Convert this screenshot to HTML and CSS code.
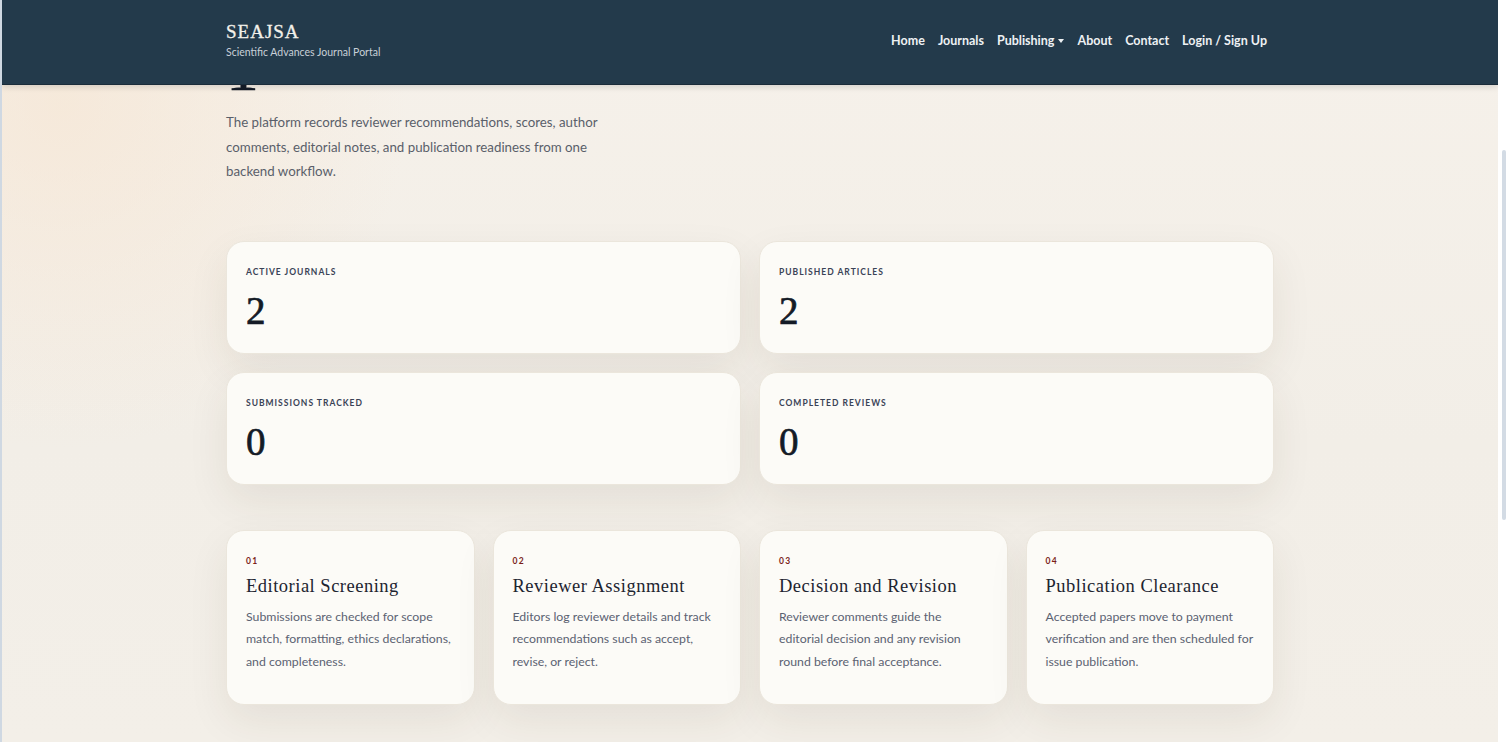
FILE: index.html
```html
<!DOCTYPE html>
<html lang="en">
<head>
    <meta charset="UTF-8">
    <meta name="viewport" content="width=device-width, initial-scale=1.0">
    <title>SEAJSA - Scientific Advances Journal Portal</title>
    <link rel="stylesheet" href="styles.css">
</head>
<body>
    <div class="window">
        <div class="page">
            <header class="site-header">
                <div class="container header-inner">
                    <a class="brand" href="#">
                        <span class="brand-name">SEAJSA</span>
                        <span class="brand-sub">Scientific Advances Journal Portal</span>
                    </a>
                    <nav class="main-nav">
                        <a href="#">Home</a>
                        <a href="#">Journals</a>
                        <a href="#" class="dropdown">Publishing <span class="caret"></span></a>
                        <a href="#">About</a>
                        <a href="#">Contact</a>
                        <a href="#">Login / Sign Up</a>
                    </nav>
                </div>
            </header>

            <main class="container">
                <section class="hero">
                    <div class="hero-number"><span>1</span></div>
                    <p class="hero-text">The platform records reviewer recommendations, scores, author comments, editorial notes, and publication readiness from one backend workflow.</p>
                </section>

                <section class="stats">
                    <div class="stat-card">
                        <div class="stat-label">Active Journals</div>
                        <div class="stat-value">2</div>
                    </div>
                    <div class="stat-card">
                        <div class="stat-label">Published Articles</div>
                        <div class="stat-value">2</div>
                    </div>
                    <div class="stat-card">
                        <div class="stat-label">Submissions Tracked</div>
                        <div class="stat-value">0</div>
                    </div>
                    <div class="stat-card">
                        <div class="stat-label">Completed Reviews</div>
                        <div class="stat-value">0</div>
                    </div>
                </section>

                <section class="steps">
                    <div class="step-card">
                        <div class="step-num">01</div>
                        <h3>Editorial Screening</h3>
                        <p>Submissions are checked for scope match, formatting, ethics declarations, and completeness.</p>
                    </div>
                    <div class="step-card">
                        <div class="step-num">02</div>
                        <h3>Reviewer Assignment</h3>
                        <p>Editors log reviewer details and track recommendations such as accept, revise, or reject.</p>
                    </div>
                    <div class="step-card">
                        <div class="step-num">03</div>
                        <h3>Decision and Revision</h3>
                        <p>Reviewer comments guide the editorial decision and any revision round before final acceptance.</p>
                    </div>
                    <div class="step-card">
                        <div class="step-num">04</div>
                        <h3>Publication Clearance</h3>
                        <p>Accepted papers move to payment verification and are then scheduled for issue publication.</p>
                    </div>
                </section>
            </main>
        </div>
        <div class="scrollbar"><div class="thumb"></div></div>
    </div>
</body>
</html>
```

FILE: styles.css
```css
html, body {
    margin: 0;
    padding: 0;
    background-color: #ffffff;
}

body {
    font-family: Lato, "Open Sans", sans-serif;
    color: #2b3445;
}

.window {
    display: flex;
    height: 742px;
    overflow: hidden;
    border-left: 2px solid #cfd8e2;
}

.page {
    flex: 1;
    position: relative;
    overflow: hidden;
    background-color: #f5f0e8;
    background-image:
        radial-gradient(circle at 4% 14%, rgba(246, 228, 208, 0.6), rgba(246, 228, 208, 0) 22%),
        linear-gradient(180deg, #f6f1ea 0%, #f2eee7 60%, #f3efe8 100%);
}

.scrollbar {
    width: 8px;
    background-color: #ffffff;
}

.thumb {
    width: 4px;
    height: 370px;
    margin: 150px 0 0 4px;
    border-radius: 2px;
    background-color: #d3dbe4;
}

.container {
    width: 1048px;
    margin: 0 auto;
}

/* header sits over the scrolled content */
.site-header {
    position: absolute;
    top: 0;
    left: 0;
    right: 0;
    height: 84px;
    z-index: 10;
    background-color: #233a4b;
    border-bottom: 1px solid #1a2c3a;
    box-shadow: 0 2px 6px rgba(20, 30, 40, 0.15);
}

.header-inner {
    height: 100%;
    display: flex;
    align-items: center;
    justify-content: space-between;
}

.brand {
    display: flex;
    flex-direction: column;
    text-decoration: none;
    margin-top: -4px;
}

.brand-name {
    font-family: "Liberation Serif", serif;
    font-size: 19px;
    line-height: 20px;
    letter-spacing: 1px;
    color: #f3f1ea;
    -webkit-text-stroke: 0.3px #f3f1ea;
}

.brand-sub {
    font-size: 10.5px;
    line-height: 13px;
    color: #c8d0d8;
    margin-top: 4px;
}

.main-nav {
    display: flex;
    align-items: center;
    gap: 13px;
    margin-right: 7px;
    margin-bottom: 4px;
}

.main-nav a {
    color: #eef1f4;
    font-size: 12.5px;
    font-weight: 700;
    text-decoration: none;
}

.caret {
    display: inline-block;
    width: 0;
    height: 0;
    margin-left: 1px;
    vertical-align: 2px;
    border-left: 3.5px solid transparent;
    border-right: 3.5px solid transparent;
    border-top: 4px solid #eef1f4;
}

/* hero: page is scrolled, only the foot of the big figure shows */
main {
    padding-top: 85px;
}

.hero-number {
    height: 13px;
    display: flex;
    align-items: flex-end;
    overflow: hidden;
    font-family: "Liberation Serif", serif;
    font-size: 66px;
    color: #141b26;
}

.hero-number span {
    line-height: 64px;
    margin-bottom: -2px;
    -webkit-text-stroke: 0.3px #141b26;
}

.hero-text {
    margin: 12px 0 0;
    max-width: 385px;
    font-size: 13.3px;
    line-height: 24.5px;
    color: #5a5f6a;
}

/* stats */
.stats {
    display: grid;
    grid-template-columns: 1fr 1fr;
    gap: 18px;
    margin-top: 57px;
}

.stat-card, .step-card {
    background-color: #fcfbf7;
    border: 1px solid #ebe6dc;
    border-radius: 18px;
    box-shadow: 0 16px 40px rgba(70, 55, 30, 0.08);
}

.stat-card {
    height: 113px;
    box-sizing: border-box;
    padding: 25px 19px 0;
}

.stat-label {
    font-size: 8.5px;
    font-weight: 700;
    letter-spacing: 1px;
    text-transform: uppercase;
    color: #3a4356;
}

.stat-value {
    font-family: "Liberation Serif", serif;
    font-size: 39px;
    line-height: 40px;
    margin-top: 14px;
    color: #141b26;
    -webkit-text-stroke: 0.7px #141b26;
}

/* workflow steps */
.steps {
    display: grid;
    grid-template-columns: repeat(4, 1fr);
    gap: 18px;
    margin-top: 45px;
}

.step-card {
    height: 175px;
    box-sizing: border-box;
    padding: 25px 19px 0;
}

.step-num {
    font-size: 8.5px;
    font-weight: 700;
    letter-spacing: 1.2px;
    color: #7b1e1a;
}

.step-card h3 {
    margin: 9px 0 0;
    font-family: "Liberation Serif", serif;
    font-weight: 400;
    font-size: 18.5px;
    line-height: 22px;
    letter-spacing: 0.5px;
    color: #1d2430;
}

.step-card p {
    margin: 9px 0 0;
    font-size: 12.3px;
    line-height: 22.5px;
    color: #5b6272;
}
```
